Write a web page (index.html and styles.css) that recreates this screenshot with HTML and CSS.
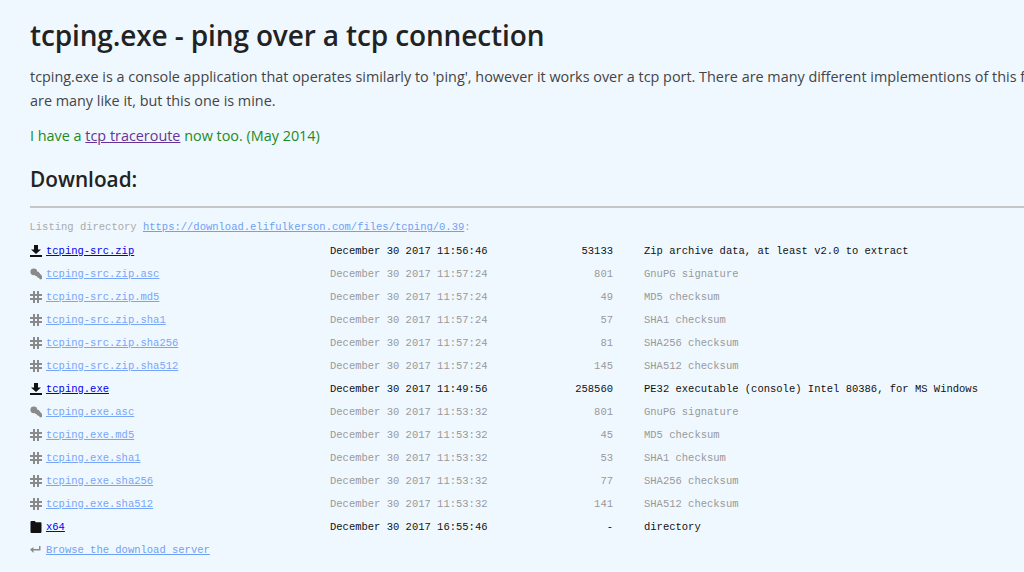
FILE: index.html
```html
<!DOCTYPE html>
<html lang="en">
<head>
    <meta charset="UTF-8">
    <meta name="viewport" content="width=device-width, initial-scale=1.0">
    <title>tcping.exe - ping over a tcp connection</title>
    <link rel="stylesheet" href="styles.css">
</head>
<body>
    <svg class="icon-defs" width="0" height="0" aria-hidden="true">
        <symbol id="i-download" viewBox="0 0 12 12"><path d="M4 0h4v4.500h3L6 9 1 4.500h3zM0 10h12v2H0z"/></symbol>
        <symbol id="i-key" viewBox="0 0 12 12"><circle cx="3.800" cy="3.800" r="3.400"/><circle cx="7" cy="6" r="2.400"/><path d="M6 6l3-1.500 3 3.500v3l-2 .5-1-1.500-1.500-.5-.5-1.500z"/></symbol>
        <symbol id="i-hash" viewBox="0 0 12 12"><path d="M3 0h2v3h2V0h2v3h3v2H9v2h3v2H9v3H7V9H5v3H3V9H0V7h3V5H0V3h3zm2 5v2h2V5z"/></symbol>
        <symbol id="i-folder" viewBox="0 0 12 12"><path d="M.5 1Q.5 0 1.500 0h3.300l1 1.200h4.700q1 0 1 1V11q0 1-1 1h-9q-1 0-1-1z"/></symbol>
        <symbol id="i-return" viewBox="0 0 12 12"><path d="M9 2h1.500v4.500H3.500V9L0 5.500 3.500 3v2H9z"/></symbol>
    </svg>

    <main class="page">
        <h1>tcping.exe - ping over a tcp connection</h1>
        <p>tcping.exe is a console application that operates similarly to 'ping', however it works over a tcp port. There are many different implementions of this fundamental idea, and there<br>are many like it, but this one is mine.</p>
        <p class="news">I have a <a class="visited" href="#">tcp traceroute</a> now too. (May 2014)</p>

        <h2>Download:</h2>
        <hr>

        <div class="listing">
            <div class="listing-head">Listing directory <a href="#">https://download.elifulkerson.com/files/tcping/0.39</a>:</div>
            <table>
                <tr><td class="ico"><svg><use href="#i-download"/></svg></td><td class="name"><a href="#">tcping-src.zip</a></td><td class="date">December 30 2017 11:56:46</td><td class="size">53133</td><td>Zip archive data, at least v2.0 to extract</td></tr>
                <tr class="minor"><td class="ico"><svg><use href="#i-key"/></svg></td><td class="name"><a href="#">tcping-src.zip.asc</a></td><td class="date">December 30 2017 11:57:24</td><td class="size">801</td><td>GnuPG signature</td></tr>
                <tr class="minor"><td class="ico"><svg><use href="#i-hash"/></svg></td><td class="name"><a href="#">tcping-src.zip.md5</a></td><td class="date">December 30 2017 11:57:24</td><td class="size">49</td><td>MD5 checksum</td></tr>
                <tr class="minor"><td class="ico"><svg><use href="#i-hash"/></svg></td><td class="name"><a href="#">tcping-src.zip.sha1</a></td><td class="date">December 30 2017 11:57:24</td><td class="size">57</td><td>SHA1 checksum</td></tr>
                <tr class="minor"><td class="ico"><svg><use href="#i-hash"/></svg></td><td class="name"><a href="#">tcping-src.zip.sha256</a></td><td class="date">December 30 2017 11:57:24</td><td class="size">81</td><td>SHA256 checksum</td></tr>
                <tr class="minor"><td class="ico"><svg><use href="#i-hash"/></svg></td><td class="name"><a href="#">tcping-src.zip.sha512</a></td><td class="date">December 30 2017 11:57:24</td><td class="size">145</td><td>SHA512 checksum</td></tr>
                <tr><td class="ico"><svg><use href="#i-download"/></svg></td><td class="name"><a href="#">tcping.exe</a></td><td class="date">December 30 2017 11:49:56</td><td class="size">258560</td><td>PE32 executable (console) Intel 80386, for MS Windows</td></tr>
                <tr class="minor"><td class="ico"><svg><use href="#i-key"/></svg></td><td class="name"><a href="#">tcping.exe.asc</a></td><td class="date">December 30 2017 11:53:32</td><td class="size">801</td><td>GnuPG signature</td></tr>
                <tr class="minor"><td class="ico"><svg><use href="#i-hash"/></svg></td><td class="name"><a href="#">tcping.exe.md5</a></td><td class="date">December 30 2017 11:53:32</td><td class="size">45</td><td>MD5 checksum</td></tr>
                <tr class="minor"><td class="ico"><svg><use href="#i-hash"/></svg></td><td class="name"><a href="#">tcping.exe.sha1</a></td><td class="date">December 30 2017 11:53:32</td><td class="size">53</td><td>SHA1 checksum</td></tr>
                <tr class="minor"><td class="ico"><svg><use href="#i-hash"/></svg></td><td class="name"><a href="#">tcping.exe.sha256</a></td><td class="date">December 30 2017 11:53:32</td><td class="size">77</td><td>SHA256 checksum</td></tr>
                <tr class="minor"><td class="ico"><svg><use href="#i-hash"/></svg></td><td class="name"><a href="#">tcping.exe.sha512</a></td><td class="date">December 30 2017 11:53:32</td><td class="size">141</td><td>SHA512 checksum</td></tr>
                <tr><td class="ico"><svg><use href="#i-folder"/></svg></td><td class="name"><a href="#">x64</a></td><td class="date">December 30 2017 16:55:46</td><td class="size">-</td><td>directory</td></tr>
                <tr class="minor browse"><td class="ico"><svg><use href="#i-return"/></svg></td><td class="name" colspan="4"><a href="#">Browse the download server</a></td></tr>
            </table>
        </div>
    </main>
</body>
</html>
```

FILE: styles.css
```css
html, body {
    margin: 0;
    height: 572px;
    overflow: hidden;
}
body {
    background-color: #f0f8ff;
    font-family: "Open Sans", sans-serif;
    color: #444;
}
.icon-defs {
    position: absolute;
}
.page {
    width: 1300px;
    padding: 15px 30px 0;
}
h1 {
    margin: 0 0 10px;
    font-size: 28px;
    line-height: 40px;
    font-weight: 600;
    letter-spacing: -0.13px;
    color: #222;
}
h2 {
    margin: 17px 0 12px;
    font-size: 20.8px;
    line-height: 29px;
    font-weight: 600;
    color: #222;
}
p {
    margin: 0 0 11px;
    font-size: 14.4px;
    line-height: 24px;
}
.news {
    color: #228b22;
}
.visited {
    color: #663399;
}
hr {
    margin: 0;
    border: 0;
    border-top: 2px solid #c4c6c8;
}
.listing {
    margin-left: -0.5px;
    font-family: "Liberation Mono", monospace;
    font-size: 10.5px;
    color: #111;
}
.listing a {
    color: #0000ee;
}
.listing-head {
    margin-top: 12px;
    height: 15px;
    line-height: 15px;
    color: #aaa;
}
.listing-head a {
    color: #6fa0f5;
}
table {
    margin-top: 4px;
    border-collapse: collapse;
}
td {
    height: 23px;
    padding: 0;
    white-space: nowrap;
}
.ico {
    width: 16.5px;
}
.ico svg {
    display: block;
    width: 12px;
    height: 12px;
    fill: #111;
}
.name {
    width: 284px;
}
.date {
    width: 197px;
}
.size {
    width: 86px;
    padding-right: 31px;
    text-align: right;
}
.minor {
    color: #999;
}
.minor a {
    color: #78a5f8;
}
.minor .ico svg {
    fill: #8a8a8a;
}
.browse a {
    color: #6fa0f5;
}
```
